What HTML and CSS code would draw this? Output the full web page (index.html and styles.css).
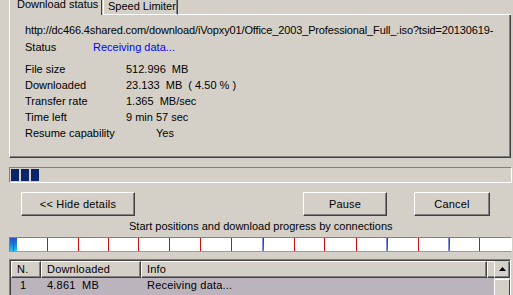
FILE: index.html
```html
<!DOCTYPE html>
<html>
<head>
<meta charset="utf-8">
<link rel="stylesheet" href="styles.css">
</head>
<body>
<div class="tabs">
  <div class="tab tab-active">Download status</div>
  <div class="tab tab-idle">Speed Limiter</div>
  <div class="tab-rest"></div>
</div>
<div class="panel">
  <div class="url">http://dc466.4shared.com/download/iVopxy01/Office_2003_Professional_Full_.iso?tsid=20130619-</div>
  <div class="status-row"><span class="lbl-status">Status</span><span class="status-val">Receiving data...</span></div>
  <div class="details">
    <span class="lbl">File size</span><span class="val">512.996  MB</span>
    <span class="lbl">Downloaded</span><span class="val">23.133  MB  ( 4.50 % )</span>
    <span class="lbl">Transfer rate</span><span class="val">1.365  MB/sec</span>
    <span class="lbl">Time left</span><span class="val">9 min 57 sec</span>
    <span class="lbl">Resume capability</span><span class="val val-yes">Yes</span>
  </div>
</div>
<div class="progress">
  <span class="block"></span><span class="block"></span><span class="block"></span>
</div>
<div class="buttons">
  <div class="btn btn-hide">&lt;&lt; Hide details</div>
  <div class="btn btn-pause">Pause</div>
  <div class="btn btn-cancel">Cancel</div>
</div>
<div class="caption">Start positions and download progress by connections</div>
<div class="conn">
  <span class="seg seg-first"></span>
  <span class="mark" style="left:37px"></span>
  <span class="mark" style="left:68px"></span>
  <span class="mark" style="left:98px"></span>
  <span class="mark" style="left:128px"></span>
  <span class="mark" style="left:159px"></span>
  <span class="mark" style="left:190px"></span>
  <span class="mark" style="left:221px"></span>
  <span class="mark mark-blue" style="left:253px"></span>
  <span class="mark" style="left:284px"></span>
  <span class="mark" style="left:314px"></span>
  <span class="mark" style="left:346px"></span>
  <span class="mark mark-blue" style="left:377px"></span>
  <span class="mark" style="left:408px"></span>
  <span class="mark mark-blue" style="left:439px"></span>
  <span class="mark" style="left:469px"></span>
</div>
<div class="list">
  <div class="list-main">
    <div class="list-head">
      <div class="hcell c-n">N.</div>
      <div class="hcell c-dl">Downloaded</div>
      <div class="hcell c-info">Info</div>
      <div class="hcell c-fill"></div>
    </div>
    <div class="row">
      <div class="cell c-n num">1</div>
      <div class="cell c-dl">4.861  MB</div>
      <div class="cell c-info">Receiving data...</div>
    </div>
    <div class="row">
      <div class="cell c-n num">2</div>
      <div class="cell c-dl">5.022  MB</div>
      <div class="cell c-info">Receiving data...</div>
    </div>
  </div>
  <div class="scroll">
    <div class="sbtn"><svg width="7" height="4" viewBox="0 0 7 4"><path d="M0 4 L3.5 0 L7 4 Z" fill="#000"/></svg></div>
    <div class="thumb"></div>
  </div>
</div>
</body>
</html>
```
FILE: styles.css
```css
html, body {
  margin: 0;
  padding: 0;
  background: #d4d0c8;
  width: 513px;
  height: 295px;
  overflow: hidden;
  font-family: "Liberation Sans", Arial, sans-serif;
  font-size: 11px;
  color: #000;
}

.tabs {
  display: flex;
  height: 15px;
  padding-left: 9px;
}
.tab {
  box-sizing: border-box;
  height: 15px;
  white-space: nowrap;
}
.tab-active {
  width: 93px;
  border-left: 1px solid #fff;
  border-right: 1px solid #404040;
  padding-left: 7px;
  line-height: 9px;
}
.tab-idle {
  width: 75px;
  margin-left: 1px;
  border-left: 1px solid #fff;
  border-right: 1px solid #404040;
  box-shadow: inset -1px 0 #808080;
  border-bottom: 1px solid #fff;
  padding-left: 4px;
  line-height: 13px;
}
.tab-rest {
  flex: 1;
  border-bottom: 1px solid #fff;
  margin-right: 2px;
}

.panel {
  box-sizing: border-box;
  margin-left: 9px;
  width: 502px;
  height: 143px;
  border-left: 1px solid #fff;
  border-right: 1px solid #404040;
  border-bottom: 1px solid #404040;
  box-shadow: inset -1px -1px #808080;
  padding: 9px 0 0 15px;
}
.url {
  line-height: 13px;
  white-space: nowrap;
  overflow: hidden;
  width: 474px;
  letter-spacing: -0.13px;
}
.status-row {
  display: flex;
  margin-top: 4px;
  line-height: 13px;
}
.lbl-status {
  width: 68px;
}
.status-val {
  color: #0000ff;
}
.details {
  display: grid;
  grid-template-columns: 101px auto;
  grid-auto-rows: 16px;
  margin-top: 7px;
  line-height: 16px;
}
.val {
  white-space: pre;
}
.val-yes {
  padding-left: 30px;
}

.progress {
  box-sizing: border-box;
  margin: 9px 0 0 9px;
  width: 503px;
  height: 16px;
  border: 1px solid;
  border-color: #808080 #fff #fff #808080;
  padding: 1px 1px;
  display: flex;
  gap: 2px;
}
.block {
  width: 8px;
  height: 12px;
  background: #0a246a;
}

.buttons {
  display: flex;
  margin-top: 9px;
  height: 24px;
}
.btn {
  box-sizing: border-box;
  height: 24px;
  border: 1px solid;
  border-color: #fff #404040 #404040 #fff;
  box-shadow: inset -1px -1px #808080;
  text-align: center;
  line-height: 22px;
  font-size: 11px;
  letter-spacing: 0.2px;
}
.btn-hide {
  margin-left: 21px;
  width: 114px;
}
.btn-pause {
  margin-left: 168px;
  width: 84px;
}
.btn-cancel {
  margin-left: 27px;
  width: 76px;
}

.caption {
  margin-top: 4px;
  height: 13px;
  line-height: 13px;
  padding-left: 129px;
  white-space: nowrap;
}

.conn {
  position: relative;
  box-sizing: border-box;
  margin: 4px 0 0 9px;
  width: 503px;
  height: 15px;
  background: #fff;
  border: 1px solid;
  border-color: #808080 #fff #9a9aa0 #808080;
}
.seg-first {
  position: absolute;
  left: 0;
  top: 0;
  width: 7px;
  height: 13px;
  background: linear-gradient(#2a4cc8, #1a8fe0 60%, #30c8f0);
}
.seg-first::before {
  content: "";
  position: absolute;
  left: 3px;
  top: 0;
  width: 1px;
  height: 13px;
  background: #d02020;
}
.mark {
  position: absolute;
  top: 0;
  width: 1px;
  height: 13px;
  background: #cc1010;
}
.mark-blue {
  background: linear-gradient(#cc1010, #cc1010 30%, #3050c8 60%, #20a0e0);
  box-shadow: -1px 0 #8090d8;
}

.list {
  display: flex;
  box-sizing: border-box;
  margin: 7px 0 0 9px;
  width: 502px;
  height: 60px;
  border: 1px solid;
  border-color: #808080 #fff #fff #808080;
  box-shadow: inset 1px 1px #404040;
  padding: 1px 0 0 1px;
}
.list-main {
  flex: 1;
  background: #bcb4bc;
}
.list-head {
  display: flex;
  height: 17px;
  background: #d4d0c8;
}
.hcell {
  box-sizing: border-box;
  height: 17px;
  border: 1px solid;
  border-color: #fff #404040 #404040 #fff;
  box-shadow: inset -1px -1px #808080;
  line-height: 15px;
  padding-left: 5px;
  white-space: nowrap;
  letter-spacing: 0.2px;
}
.c-n {
  width: 30px;
}
.c-dl {
  width: 100px;
}
.c-info {
  width: 346px;
}
.c-fill {
  flex: 1;
  border-right: none;
  box-shadow: inset 0 -1px #808080;
}
.row {
  display: flex;
  height: 13px;
  line-height: 13px;
  margin-top: 1px;
  white-space: pre;
  letter-spacing: 0.2px;
}
.cell {
  box-sizing: border-box;
  padding-left: 6px;
}
.num {
  padding-left: 9px;
}
.scroll {
  width: 16px;
  display: flex;
  flex-direction: column;
  background: #e8e6e2;
}
.sbtn {
  box-sizing: border-box;
  height: 17px;
  border: 1px solid;
  border-color: #d4d0c8 #404040 #404040 #fff;
  box-shadow: inset -1px -1px #808080;
  background: #d4d0c8;
  display: flex;
  align-items: center;
  justify-content: center;
}
.thumb {
  box-sizing: border-box;
  margin-top: 1px;
  height: 40px;
  border: 1px solid;
  border-color: #fff #404040 #404040 #fff;
  background: #d4d0c8;
}
```
